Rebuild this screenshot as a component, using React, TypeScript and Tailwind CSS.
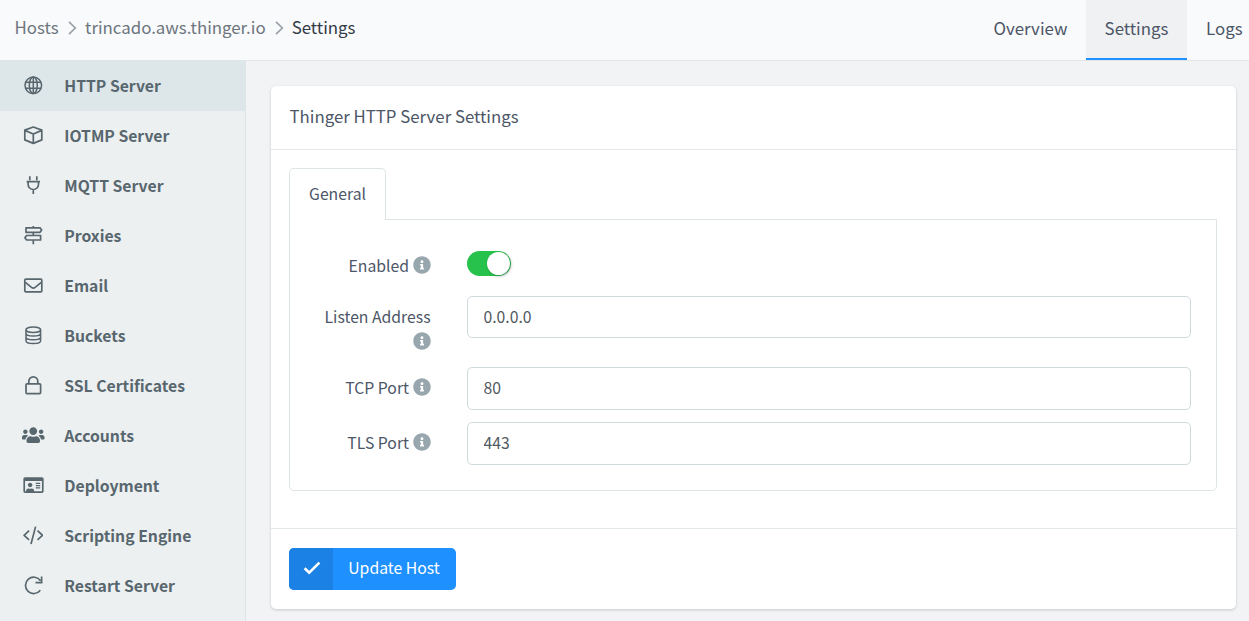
import type { ReactNode } from "react";
import { FaInfoCircle, FaRegIdCard, FaUsers } from "react-icons/fa";

function Line({ children, width = 1.7 }: { children: ReactNode; width?: number }) {
  return (
    <svg
      width="20"
      height="20"
      viewBox="0 0 20 20"
      fill="none"
      stroke="currentColor"
      strokeWidth={width}
      strokeLinejoin="round"
      className="shrink-0"
    >
      {children}
    </svg>
  );
}

const items: { label: string; icon: ReactNode }[] = [
  {
    label: "HTTP Server",
    icon: (
      <Line width={1.5}>
        <circle cx="10.3" cy="10.3" r="8.3" />
        <ellipse cx="10.3" cy="10.3" rx="4" ry="8.3" />
        <path d="M10.3 2v16.6M2.7 7.3h15.2M2.7 13.3h15.2" />
      </Line>
    ),
  },
  {
    label: "IOTMP Server",
    icon: (
      <Line>
        <path d="M10.3 2l8.5 3.1v9.8l-8.5 3.5-8.5-3.5V5.1zM1.8 5.4L10.3 9l8.5-3.6M10.3 9v9.4" />
      </Line>
    ),
  },
  {
    label: "MQTT Server",
    icon: (
      <Line>
        <path d="M6.8 1.2v4M13.8 1.2v4M3.6 6.7H17M5.1 6.7v2.6a5.2 5.2 0 0 0 10.4 0V6.7M10.3 14.5V19" />
      </Line>
    ),
  },
  {
    label: "Proxies",
    icon: (
      <Line>
        <path d="M10.3 1v1.5M10.3 7.5v3M10.3 15.2v4M3 2.8h14L18.7 5 17 7.3H3zM17.6 10.5h-14l-1.7 2.2L3.6 15h14z" />
      </Line>
    ),
  },
  {
    label: "Email",
    icon: (
      <Line>
        <rect x="1.8" y="4.2" width="17" height="12.6" rx="1" />
        <path d="M2.3 7.4l6.2 5c1.2.9 2.4.9 3.6 0l6.2-5" />
      </Line>
    ),
  },
  {
    label: "Buckets",
    icon: (
      <Line width={1.5}>
        <ellipse cx="10.3" cy="4.7" rx="7.3" ry="2.8" />
        <path d="M3 4.7v11c0 1.6 3.3 2.8 7.3 2.8s7.3-1.2 7.3-2.8v-11M3 8.3c0 1.6 3.3 2.8 7.3 2.8s7.3-1.2 7.3-2.8M3 12c0 1.6 3.3 2.8 7.3 2.8s7.3-1.2 7.3-2.8" />
      </Line>
    ),
  },
  {
    label: "SSL Certificates",
    icon: (
      <Line>
        <rect x="3" y="8.8" width="14.6" height="9.8" rx="1" />
        <path d="M5.8 8.8V6.3a4.5 4.5 0 0 1 9 0v2.5" />
      </Line>
    ),
  },
  { label: "Accounts", icon: <FaUsers className="h-[18px] w-[22.5px] shrink-0" /> },
  { label: "Deployment", icon: <FaRegIdCard className="h-[18px] w-[21px] shrink-0" /> },
  {
    label: "Scripting Engine",
    icon: (
      <Line>
        <path d="M6.1 5.7l-5 4.6 5 4.6M14.5 5.7l5 4.6-5 4.6M12.6 1.6L8 19" />
      </Line>
    ),
  },
  {
    label: "Restart Server",
    icon: (
      <Line>
        <path d="M17.3 15.2a8.2 8.2 0 1 1 .2-9.4M18.6 1.6v6h-6.1" strokeLinejoin="miter" />
      </Line>
    ),
  },
];

function Chevron() {
  return (
    <svg width="9" height="14" viewBox="0 0 9 14" fill="none" stroke="#9ba1a9" strokeWidth="1.7">
      <path d="M1 .8L7.3 7 1 13.2" />
    </svg>
  );
}

function Info() {
  return <FaInfoCircle className="inline size-[18px] align-[-2px] text-[#98a6ad]" />;
}

function Field({ label, value, className }: { label: string; value: string; className: string }) {
  return (
    <div className={`flex ${className}`}>
      <label className="w-[140.5px] pt-2 pl-8 text-right leading-[25px]">
        {label} <Info />
      </label>
      <input
        readOnly
        value={value}
        className="ml-[36.5px] w-[724px] rounded-[5px] border border-[#cfdbdd] px-[15.5px] pb-px text-[#515a61] outline-none"
      />
    </div>
  );
}

export default function App() {
  return (
    <div className="flex h-[621px] w-full flex-col overflow-hidden bg-[#f1f3f5] font-['Noto_Sans_CJK_SC','Noto_Sans',sans-serif] text-[15.75px] text-[#4c5667]">
      <header className="flex h-[61px] shrink-0 justify-between border-b border-[#e3e6e8] bg-[#f9fafc] text-[16.85px]">
        <nav className="flex h-[54px] items-center pl-[14.5px] text-[#6c757d]">
          <a>Hosts</a>
          <span className="mr-[8.5px] ml-[9px] pt-0.5">
            <Chevron />
          </span>
          <a>trincado.aws.thinger.io</a>
          <span className="mr-[8px] ml-[9px] pt-0.5">
            <Chevron />
          </span>
          <span className="text-[#323a46]">Settings</span>
        </nav>
        <nav className="flex">
          <a className="flex h-[60px] w-[111px] items-center justify-center pb-1">Overview</a>
          <a className="flex h-[60px] w-[101px] items-center justify-center border-b-2 border-[#1e90ff] bg-[#f0f1f3] pb-0.5">
            Settings
          </a>
          <a className="flex h-[60px] w-[62px] items-center pb-1 pl-[19px]">Logs</a>
        </nav>
      </header>
      <div className="flex min-h-0 flex-1">
        <aside className="w-[246px] shrink-0 border-r border-[#dee5e7] bg-[#ecf0f1] text-[15.74px] font-bold text-[#58666e]">
          {items.map((item, i) => (
            <a key={item.label} className={`flex h-[50px] items-center ${i === 0 ? "bg-[#dde6e9]" : ""}`}>
              <span className="mb-0.5 ml-[21.25px] flex w-6 justify-center">{item.icon}</span>
              <span className="ml-[19px]">{item.label}</span>
            </a>
          ))}
        </aside>
        <main className="pt-[25px] pl-[25px]">
          <section className="w-[965px] rounded-[5px] bg-white shadow-[0_1px_3px_rgba(0,0,0,0.18)]">
            <h2 className="flex h-16 items-center border-b border-[#e3e8ea] pb-1 pl-[18.5px] text-[16.82px] leading-6">
              Thinger HTTP Server Settings
            </h2>
            <div className="h-[378px] px-[18px] pt-[18px]">
              <div className="relative z-10 flex h-[52px] w-[97px] items-center justify-center rounded-t-[5px] border border-b-0 border-[#dee5e7] bg-white pb-0.5">
                General
              </div>
              <div className="-mt-px h-[272px] w-[928px] rounded-b-[5px] border border-[#dee5e7] pt-[31px]">
                <div className="flex h-[45px]">
                  <span className="w-[140.5px] pt-[3px] text-right leading-6">
                    Enabled <Info />
                  </span>
                  <span className="ml-[36.5px] flex h-[25px] w-11 justify-end rounded-full bg-[#27c24c] p-px">
                    <span className="size-[23px] rounded-full bg-white shadow-[1px_1px_3px_rgba(0,0,0,0.3)]" />
                  </span>
                </div>
                <Field label="Listen Address" value="0.0.0.0" className="h-[42px]" />
                <Field label="TCP Port" value="80" className="mt-[29px] h-[43px]" />
                <Field label="TLS Port" value="443" className="mt-3 h-[43px]" />
              </div>
            </div>
            <footer className="h-[81px] border-t border-[#e3e8ea] pt-[19px] pl-[18px]">
              <button className="flex h-[42px] w-[167px] overflow-hidden rounded-[5px] bg-[#1e90ff] text-white">
                <span className="flex h-full w-11 items-center justify-center bg-[#1c81e5]">
                  <svg
                    width="18"
                    height="14"
                    viewBox="0 0 18 14"
                    fill="none"
                    stroke="currentColor"
                    strokeWidth="2.6"
                    className="mb-0.5 ml-0.5"
                  >
                    <path d="M1.6 7.2l4.6 4.4L16.4 1.6" />
                  </svg>
                </span>
                <span className="flex h-full flex-1 items-center justify-center pr-px pb-0.5">Update Host</span>
              </button>
            </footer>
          </section>
        </main>
      </div>
    </div>
  );
}
